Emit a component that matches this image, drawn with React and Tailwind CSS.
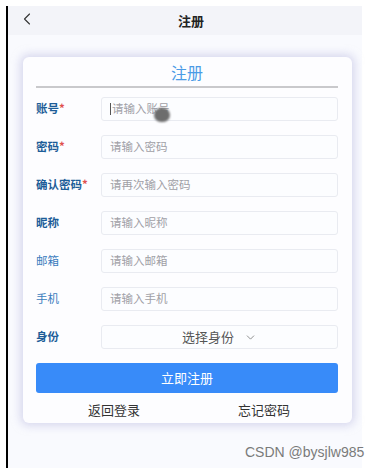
import { ChevronLeft, ChevronDown } from 'lucide-react';

const fields = [
  { label: '账号', req: true, ph: '请输入账号', bold: true },
  { label: '密码', req: true, ph: '请输入密码', bold: true },
  { label: '确认密码', req: true, ph: '请再次输入密码', bold: true },
  { label: '昵称', ph: '请输入昵称', bold: true },
  { label: '邮箱', ph: '请输入邮箱' },
  { label: '手机', ph: '请输入手机' },
];

const font = { fontFamily: '"Noto Sans CJK SC", "Noto Sans", sans-serif' };

export default function App() {
  return (
    <div className="relative w-[381px] h-[468px] bg-white overflow-hidden" style={font}>
      <div className="flex h-full pt-[6px]">
        <div className="w-[6px]" />
        <div className="w-[2px] bg-black" />
        <div className="w-[354px] bg-[#f9fafe] flex flex-col">
          {/* Header */}
          <div className="h-[29px] bg-[#f3f4f9] flex items-center relative">
            <ChevronLeft size={20} strokeWidth={1.3} className="absolute left-[9px] top-[3px] text-[#333]" />
            <div className="flex-1 text-center text-[13px] font-bold text-[#222] pl-[12px]">注册</div>
          </div>

          {/* Card */}
          <div className="ml-[15px] mr-[10px] mt-[22px] h-[366px] bg-[#fdfdff] rounded-[6px] shadow-[0_0_8px_3px_rgba(190,190,225,0.55)] px-[13px] pr-[14px] pt-[4px]">
            <div className="text-center text-[16px] leading-[22px] text-[#4b9be6]">注册</div>
            <div className="h-[2px] bg-[#c9c9cc] mt-[3px]" />
            <div className="flex flex-col gap-[14px] mt-[9px]">
              {fields.map((f, i) => (
                <div key={i} className="flex items-center h-[24px]">
                  <div className={`w-[65px] text-[11.5px] ${f.bold ? 'font-bold text-[#1d5d98]' : 'text-[#3a7cbd]'}`}>
                    {f.label}{f.req && <span className="text-[#e0524f]">*</span>}
                  </div>
                  <div className="flex-1 h-[24px] border border-[#e9ebf1] rounded-[3px] bg-[#fcfdff] flex items-center px-[8px] text-[11.5px] text-[#a0a0a6]">
                    {i === 0 && <span className="w-[1px] h-[12px] bg-[#555] mr-[1px]" />}
                    {f.ph}
                  </div>
                </div>
              ))}
              <div className="flex items-center h-[24px]">
                <div className="w-[65px] text-[11.5px] font-bold text-[#1d5d98]">身份</div>
                <div className="flex-1 h-[24px] border border-[#e9ebf1] rounded-[3px] bg-[#fcfdff] flex items-center justify-center gap-[10px] text-[13px] text-[#555]">
                  <span>选择身份</span>
                  <ChevronDown size={13} strokeWidth={1.5} className="text-[#777]" />
                </div>
              </div>
            </div>
            <div className="mt-[14px] h-[30px] bg-[#388bf9] rounded-[3px] flex items-center justify-center text-[13px] text-white">立即注册</div>
            <div className="flex mt-[7px] text-[13px] text-[#333]">
              <div className="w-[104px] text-right">返回登录</div>
              <div className="w-[150px] text-right">忘记密码</div>
            </div>
          </div>
        </div>
      </div>

      {/* cursor */}
      <div className="absolute left-[154px] top-[108px] w-[16px] h-[14px] rounded-full bg-[#6d6d6d] blur-[1px]" />

      {/* watermark */}
      <div className="absolute left-[245px] top-[442px] text-[14px] text-[#7a7a7a]" style={{ fontFamily: '"Liberation Sans", Arial, sans-serif' }}>
        CSDN @bysjlw985
      </div>
    </div>
  );
}
